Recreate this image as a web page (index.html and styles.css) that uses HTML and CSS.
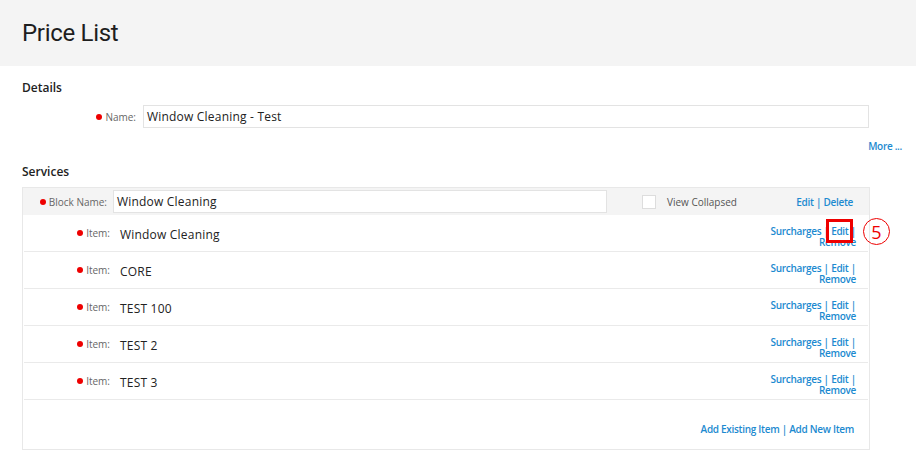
FILE: index.html
```html
<!DOCTYPE html>
<html lang="en">
<head>
  <meta charset="UTF-8">
  <title>Price List</title>
  <link rel="stylesheet" href="styles.css">
</head>
<body>
  <div class="page-head">
    <h1>Price List</h1>
  </div>

  <div class="content">
    <h2>Details</h2>
    <div class="field-row">
      <label class="req name-label">Name:</label>
      <div class="text-box name-box">Window Cleaning - Test</div>
    </div>
    <div class="more"><a href="#">More ...</a></div>

    <h2 class="services-title">Services</h2>
    <div class="block">
      <div class="block-head">
        <label class="req block-label">Block Name:</label>
        <div class="text-box block-box">Window Cleaning</div>
        <span class="check"></span>
        <span class="check-text">View Collapsed</span>
        <span class="block-links"><a href="#">Edit</a> | <a href="#">Delete</a></span>
      </div>

      <div class="item-row">
        <label class="req item-label">Item:</label>
        <span class="item-value">Window Cleaning</span>
        <span class="item-links"><a href="#">Surcharges</a> | <a href="#" class="marked">Edit</a> | <a href="#">Remove</a></span>
        <span class="step">5</span>
      </div>
      <div class="item-row">
        <label class="req item-label">Item:</label>
        <span class="item-value">CORE</span>
        <span class="item-links"><a href="#">Surcharges</a> | <a href="#">Edit</a> | <a href="#">Remove</a></span>
      </div>
      <div class="item-row">
        <label class="req item-label">Item:</label>
        <span class="item-value">TEST 100</span>
        <span class="item-links"><a href="#">Surcharges</a> | <a href="#">Edit</a> | <a href="#">Remove</a></span>
      </div>
      <div class="item-row">
        <label class="req item-label">Item:</label>
        <span class="item-value">TEST 2</span>
        <span class="item-links"><a href="#">Surcharges</a> | <a href="#">Edit</a> | <a href="#">Remove</a></span>
      </div>
      <div class="item-row">
        <label class="req item-label">Item:</label>
        <span class="item-value">TEST 3</span>
        <span class="item-links"><a href="#">Surcharges</a> | <a href="#">Edit</a> | <a href="#">Remove</a></span>
      </div>

      <div class="block-foot">
        <a href="#">Add Existing Item</a> | <a href="#">Add New Item</a>
      </div>
    </div>
  </div>
</body>
</html>
```

FILE: styles.css
```css
body {
  margin: 0;
  font-family: "Open Sans", Arial, sans-serif;
  color: #222;
  background: #fff;
}

a {
  color: #1c8ad0;
  text-decoration: none;
}

.page-head {
  background: #f4f4f4;
  height: 66px;
  padding-left: 22px;
  display: flex;
  align-items: center;
}
.page-head h1 {
  margin: 0;
  font-family: Roboto, Arial, sans-serif;
  font-size: 24px;
  font-weight: 400;
  color: #1e1e1e;
  letter-spacing: -0.3px;
}

.content {
  padding: 14px 14px 0 22px;
}

h2 {
  margin: 0;
  font-size: 12px;
  font-weight: 600;
  color: #222;
  line-height: 16px;
}

.req {
  display: flex;
  align-items: center;
  justify-content: flex-end;
  font-size: 10px;
  color: #666;
}
.req::before {
  content: "";
  width: 6px;
  height: 6px;
  border-radius: 50%;
  background: #e00;
  margin-right: 3px;
}

.text-box {
  height: 23px;
  box-sizing: border-box;
  border: 1px solid #e3e3e3;
  background: #fff;
  font-size: 12px;
  font-weight: 500;
  letter-spacing: 0.2px;
  padding: 0 3px;
  display: flex;
  align-items: center;
}

.field-row {
  display: flex;
  align-items: center;
  margin-top: 9px;
}
.name-label {
  width: 114px;
  margin-right: 7px;
}
.name-box {
  width: 726px;
}

.more {
  text-align: right;
  font-size: 10px;
  font-weight: 600;
  letter-spacing: -0.3px;
  margin-top: 11px;
  line-height: 14px;
}

.services-title {
  margin-top: 11px;
}

.block {
  width: 848px;
  box-sizing: border-box;
  border: 1px solid #e8e8e8;
  margin-top: 7px;
  height: 263px;
}

.block-head {
  display: flex;
  align-items: center;
  height: 27px;
  background: #f4f4f4;
}
.block-label {
  width: 84px;
  margin-right: 6px;
}
.block-box {
  width: 494px;
}
.check {
  width: 14px;
  height: 14px;
  box-sizing: border-box;
  background: #fff;
  border: 1px solid #ddd;
  margin-left: 35px;
}
.check-text {
  margin-left: 11px;
  font-size: 10px;
  color: #555;
}
.block-links {
  margin-left: auto;
  margin-right: 16px;
  font-size: 10px;
  font-weight: 600;
  letter-spacing: -0.3px;
  color: #1c8ad0;
}

.item-row {
  position: relative;
  display: flex;
  align-items: center;
  height: 36px;
  margin: 0 1px;
  border-bottom: 1px solid #eaeaea;
}
.item-label {
  width: 86px;
  margin-right: 10px;
}
.item-value {
  font-size: 12px;
  font-weight: 500;
  letter-spacing: 0.2px;
  padding-top: 2px;
}
.item-links {
  margin-left: auto;
  margin-right: 12px;
  width: 86px;
  text-align: right;
  font-size: 10px;
  font-weight: 600;
  letter-spacing: -0.3px;
  line-height: 11px;
  color: #1c8ad0;
  padding-top: 8px;
}
.marked {
  outline: 3px solid #e00;
  outline-offset: 2px;
}
.step {
  position: absolute;
  left: 839px;
  top: 3px;
  width: 27px;
  height: 27px;
  box-sizing: border-box;
  border: 1.5px solid #e00;
  border-radius: 50%;
  color: #e00;
  font-size: 18px;
  display: flex;
  align-items: center;
  justify-content: center;
}

.block-foot {
  text-align: right;
  padding: 22px 15px 0 0;
  font-size: 10px;
  font-weight: 600;
  letter-spacing: -0.3px;
  color: #1c8ad0;
}
```
